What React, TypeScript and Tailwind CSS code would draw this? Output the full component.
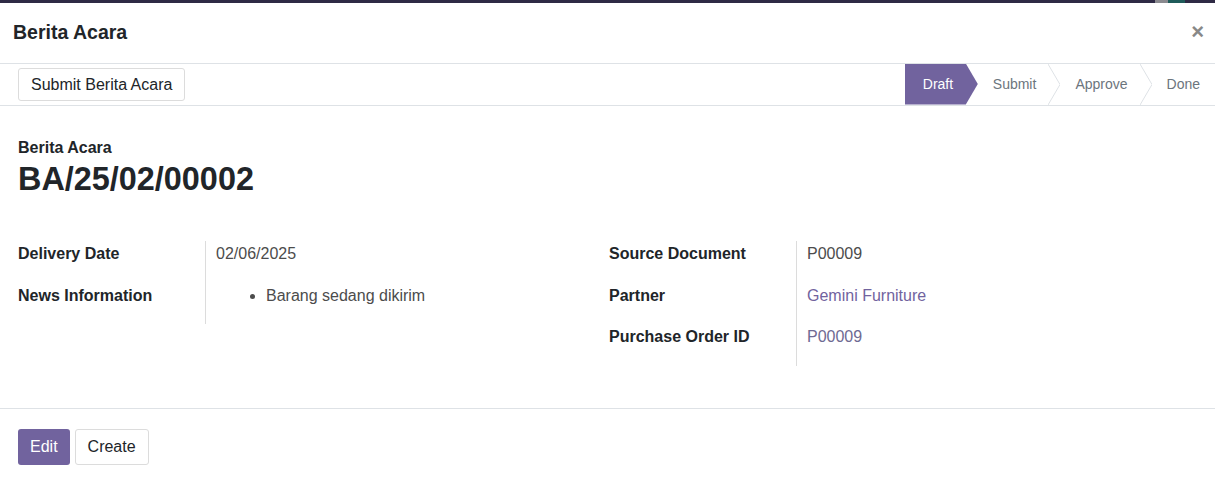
const steps = ["Submit", "Approve", "Done"];

const Chevron = () => (
    <svg width="12" height="41" viewBox="0 0 12 41" className="shrink-0">
        <polyline points="0,0 12,20.5 0,41" fill="none" stroke="#dee2e6" strokeWidth="1" />
    </svg>
);

const Field = ({ label, children }: { label: string; children: React.ReactNode }) => (
    <div className="flex h-[41.5px]">
        <div className="w-[187px] shrink-0 pt-[1px] font-bold text-[#212529] leading-6">{label}</div>
        <div className="flex-1 border-l border-[#dcdcdc] pl-[10px] pt-[1px] leading-6">{children}</div>
    </div>
);

const App = () => {
    return (
        <div className="w-[1215px] h-[482px] bg-white overflow-hidden font-['Liberation_Sans',Arial,sans-serif] text-base text-[#212529]">
            {/* backdrop strip behind the dialog */}
            <div className="flex h-[3px] bg-[#2e2a45]">
                <div className="ml-auto w-[13px] bg-[#8a8a8f]" />
                <div className="w-[17px] bg-[#1f5b5a]" />
                <div className="w-[30px]" />
            </div>

            <header className="flex items-center justify-between h-[61px] pl-[13px] pr-[11px] border-b border-[#dee2e6]">
                <h4 className="text-[19.5px] font-bold text-[#212529]">Berita Acara</h4>
                <button type="button" className="text-[22px] font-bold leading-none text-[#888] -mt-[3px]">
                    ×
                </button>
            </header>

            <div className="flex items-center justify-between h-[42px] pl-[18px] border-b border-[#dee2e6]">
                <button
                    type="button"
                    className="h-[33px] px-[12px] border border-[#dcdcdc] rounded-[3px] bg-white text-[#212529]"
                >
                    Submit Berita Acara
                </button>
                <div className="flex h-[41px] items-center text-sm -mt-[1px]">
                    <div className="h-full w-[73px] flex items-center pl-[18px] bg-[#71639e] text-white [clip-path:polygon(0_0,61px_0,100%_50%,61px_100%,0_100%)]">
                        Draft
                    </div>
                    {steps.map((s, i) => (
                        <div key={s} className="flex h-full items-center">
                            <span className={`pl-[15px] text-[#6c757d] ${i < steps.length - 1 ? "pr-[12px]" : "pr-[15px]"}`}>{s}</span>
                            {i < steps.length - 1 && <Chevron />}
                        </div>
                    ))}
                </div>
            </div>

            <div className="px-[18px] pt-[30px] h-[302px]">
                <div className="font-bold leading-6">Berita Acara</div>
                <h1 className="text-[32.4px] font-bold leading-[38px] text-[#212529]">BA/25/02/00002</h1>

                <div className="grid grid-cols-[591px_1fr] mt-[43px]">
                    <div>
                        <Field label="Delivery Date">
                            <span className="text-[#4c4c4c]">02/06/2025</span>
                        </Field>
                        <Field label="News Information">
                            <ul className="list-disc pl-[50px] text-[#4c4c4c]">
                                <li>Barang sedang dikirim</li>
                            </ul>
                        </Field>
                    </div>
                    <div>
                        <Field label="Source Document">
                            <span className="text-[#4c4c4c]">P00009</span>
                        </Field>
                        <Field label="Partner">
                            <span className="text-[#71639e]">Gemini Furniture</span>
                        </Field>
                        <Field label="Purchase Order ID">
                            <span className="text-[#6f6a93]">P00009</span>
                        </Field>
                    </div>
                </div>
            </div>

            <footer className="flex gap-[5px] px-[18px] pt-[20px] border-t border-[#dee2e6]">
                <button type="button" className="h-[36px] px-[12px] rounded-[3px] bg-[#71639e] text-white">
                    Edit
                </button>
                <button
                    type="button"
                    className="h-[36px] px-[12px] rounded-[3px] border border-[#dcdcdc] bg-white text-[#212529]"
                >
                    Create
                </button>
            </footer>
        </div>
    );
};

export default App;
